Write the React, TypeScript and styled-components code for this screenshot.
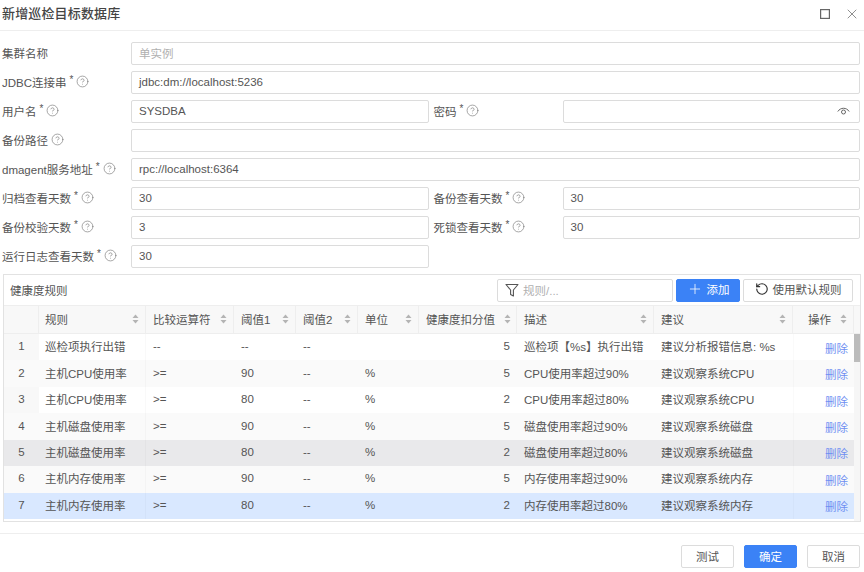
import React from "react";
import styled, { createGlobalStyle } from "styled-components";
import { CircleHelp, Plus, RotateCcw, X } from "lucide-react";

const FONT = `"Liberation Sans", "Noto Sans CJK SC", sans-serif`;
const COLUMNS = "35px 107px 88px 62px 62px 61px 98px 137px 139px 61px";

const GlobalStyle = createGlobalStyle`
  html, body {
    margin: 0;
    padding: 0;
    background: #fff;
    font-family: ${FONT};
  }
  * {
    box-sizing: border-box;
  }
`;

const Dialog = styled.div`
  width: 864px;
  height: 572px;
  display: flex;
  flex-direction: column;
  background: #fff;
  color: #555;
  font-size: 11.5px;
  overflow: hidden;
`;

const Header = styled.div`
  height: 31px;
  flex: none;
  display: flex;
  align-items: center;
  justify-content: space-between;
  padding: 0 4px 3px 2px;
  border-bottom: 1px solid #eee;
`;

const Title = styled.div`
  font-size: 13px;
  font-weight: 500;
  letter-spacing: 0.15px;
  color: #444;
  padding-bottom: 2px;
`;

const HeaderTools = styled.div`
  display: flex;
  align-items: center;
  gap: 14px;
  color: #666;
`;

const Form = styled.div`
  display: flex;
  flex-direction: column;
  gap: 6px;
  padding: 11px 4px 0 2px;
`;

const FormRow = styled.div`
  display: flex;
  gap: 5px;
  height: 23px;
`;

const Field = styled.div`
  flex: 1 1 0;
  min-width: 0;
  display: flex;
  align-items: center;
`;

const Label = styled.div`
  width: 129px;
  flex: none;
  display: flex;
  align-items: center;
  white-space: nowrap;
  color: #555;
  padding-bottom: 2px;
`;

const Star = styled.span`
  margin-left: 3px;
  font-size: 10px;
  line-height: 1;
  position: relative;
  top: -2px;
`;

const Help = styled(CircleHelp)`
  margin-left: 3px;
  color: #777;
  flex: none;
`;

const InputBox = styled.div<{ $empty?: boolean }>`
  flex: 1;
  height: 23px;
  display: flex;
  align-items: center;
  justify-content: space-between;
  padding: 0 7px 2px;
  border: 1px solid #dcdcdc;
  border-radius: 2px;
  color: ${(p) => (p.$empty ? "#b0b0b0" : "#555")};
  background: #fff;
`;

const Panel = styled.div`
  margin: 6px 3px 0 3px;
  height: 248px;
  flex: none;
  border: 1px solid #e2e2e2;
  display: flex;
  flex-direction: column;
  overflow: hidden;
`;

const Toolbar = styled.div`
  height: 30px;
  flex: none;
  display: flex;
  align-items: center;
  padding: 0 7px 0 6px;
`;

const PanelTitle = styled.div`
  flex: 1;
`;

const SearchBox = styled.div`
  width: 176px;
  height: 23px;
  display: flex;
  align-items: center;
  gap: 4px;
  padding: 0 7px;
  border: 1px solid #dcdcdc;
  border-radius: 2px;
  color: #b0b0b0;
`;

const Button = styled.button<{ $primary?: boolean; $w: number }>`
  width: ${(p) => p.$w}px;
  height: 23px;
  display: inline-flex;
  align-items: center;
  justify-content: center;
  gap: 4px;
  padding: 0 0 2px;
  font: inherit;
  border-radius: 2px;
  border: 1px solid ${(p) => (p.$primary ? "#3b82f6" : "#dcdcdc")};
  background: ${(p) => (p.$primary ? "#3b82f6" : "#fff")};
  color: ${(p) => (p.$primary ? "#fff" : "#555")};
`;

const AddButton = styled(Button)`
  margin-left: 3px;
`;

const ResetButton = styled(Button)`
  margin-left: 3px;
`;

const HeadRow = styled.div`
  height: 29px;
  flex: none;
  display: grid;
  grid-template-columns: ${COLUMNS} 6px;
  background: #f8f8f8;
  border-top: 1px solid #eee;
  border-bottom: 1px solid #eee;
`;

const HeadCell = styled.div<{ $end?: boolean }>`
  display: flex;
  align-items: center;
  justify-content: ${(p) => (p.$end ? "flex-end" : "space-between")};
  gap: 9px;
  padding: 0 6px 2px 7px;
  border-right: 1px solid #eee;
  color: #555;
  white-space: nowrap;
`;

const RuleHead = styled(HeadCell)`
  padding-left: 6px;
`;

const TableBody = styled.div`
  flex: 1;
  min-height: 0;
  display: flex;
`;

const Rows = styled.div`
  width: 850px;
  flex: none;
`;

const tones = {
  plain: "#fff",
  even: "#fafafa",
  hover: "#e9e9eb",
  selected: "#d9e8ff",
};

const Row = styled.div<{ $tone: keyof typeof tones }>`
  height: 26.45px;
  display: grid;
  grid-template-columns: ${COLUMNS};
  align-items: stretch;
  background: ${(p) => tones[p.$tone]};
`;

const Cell = styled.div<{ $align?: string }>`
  display: flex;
  align-items: center;
  justify-content: ${(p) => p.$align || "flex-start"};
  padding: 0 7px 2px;
  white-space: nowrap;
  overflow: hidden;
  color: #555;
`;

const IndexCell = styled(Cell)<{ $plain: boolean }>`
  justify-content: center;
  padding: 0 0 2px;
  background: ${(p) => (p.$plain ? "#f8f8f8" : "transparent")};
`;

const RuleCell = styled(Cell)`
  padding-left: 6px;
  border-right: 1px solid rgba(0, 0, 0, 0.025);
`;

const DeleteCell = styled(Cell)`
  justify-content: flex-end;
  padding: 1px 6px 0 0;
  color: #6f8ff2;
  border-left: 1px solid rgba(0, 0, 0, 0.02);
`;

const Track = styled.div`
  width: 6px;
  flex: none;
  background: #f6f6f6;
`;

const Thumb = styled.div`
  height: 28px;
  background: #bcbcbc;
`;

const Footer = styled.div`
  margin-top: 11px;
  border-top: 1px solid #eee;
  flex: 1;
  display: flex;
  justify-content: flex-end;
  align-items: flex-start;
  gap: 10px;
  padding: 11px 4px 0 0;
`;

const SortIcon = () => (
  <svg width="7" height="10" viewBox="0 0 7 10" style={{ flex: "none" }}>
    <path d="M3.5 0.5 L6.5 4 L0.5 4 Z" fill="#b4b4b4" />
    <path d="M3.5 9.5 L6.5 6 L0.5 6 Z" fill="#b4b4b4" />
  </svg>
);

const MaximizeIcon = () => (
  <svg width="10" height="10" viewBox="0 0 10 10" fill="none">
    <rect x="0.6" y="0.6" width="8.8" height="8.8" stroke="currentColor" strokeWidth="1.2" />
  </svg>
);

const EyeIcon = () => (
  <svg width="13" height="10" viewBox="0 0 13 10" fill="none" stroke="#666" strokeWidth="1" style={{ marginRight: 2 }}>
    <path d="M0.8 5.5 C3.5 1.2 9.5 1.2 12.2 5.5" />
    <circle cx="6.5" cy="6" r="2" />
  </svg>
);

const FunnelIcon = () => (
  <svg width="14" height="14" viewBox="0 0 14 14" fill="none" stroke="#555" strokeWidth="1.1" strokeLinejoin="round">
    <path d="M1 1.5 H13 L8.4 7 V13 L5.6 11.4 V7 Z" />
  </svg>
);

const FormLabel = ({ text, star, help }: { text: string; star?: boolean; help?: boolean }) => (
  <Label>
    {text}
    {star && <Star>*</Star>}
    {help && <Help size={13} strokeWidth={1.2} />}
  </Label>
);

const heads = ["比较运算符", "阈值1", "阈值2", "单位", "健康度扣分值", "描述", "建议"];

type Rule = [string, string, string, string, string, string, string, string];

const rules: Rule[] = [
  ["巡检项执行出错", "--", "--", "--", "", "5", "巡检项【%s】执行出错", "建议分析报错信息: %s"],
  ["主机CPU使用率", ">=", "90", "--", "%", "5", "CPU使用率超过90%", "建议观察系统CPU"],
  ["主机CPU使用率", ">=", "80", "--", "%", "2", "CPU使用率超过80%", "建议观察系统CPU"],
  ["主机磁盘使用率", ">=", "90", "--", "%", "5", "磁盘使用率超过90%", "建议观察系统磁盘"],
  ["主机磁盘使用率", ">=", "80", "--", "%", "2", "磁盘使用率超过80%", "建议观察系统磁盘"],
  ["主机内存使用率", ">=", "90", "--", "%", "5", "内存使用率超过90%", "建议观察系统内存"],
  ["主机内存使用率", ">=", "80", "--", "%", "2", "内存使用率超过80%", "建议观察系统内存"],
];

const toneOf = (i: number): keyof typeof tones => {
  if (i === 4) return "hover";
  if (i === 6) return "selected";
  return i % 2 === 1 ? "even" : "plain";
};

export default function App() {
  return (
    <Dialog>
      <GlobalStyle />
      <Header>
        <Title>新增巡检目标数据库</Title>
        <HeaderTools>
          <MaximizeIcon />
          <X size={16} strokeWidth={1.1} />
        </HeaderTools>
      </Header>

      <Form>
        <FormRow>
          <Field>
            <FormLabel text="集群名称" />
            <InputBox $empty>单实例</InputBox>
          </Field>
        </FormRow>
        <FormRow>
          <Field>
            <FormLabel text="JDBC连接串" star help />
            <InputBox>jdbc:dm://localhost:5236</InputBox>
          </Field>
        </FormRow>
        <FormRow>
          <Field>
            <FormLabel text="用户名" star help />
            <InputBox>SYSDBA</InputBox>
          </Field>
          <Field>
            <FormLabel text="密码" star help />
            <InputBox>
              <span />
              <EyeIcon />
            </InputBox>
          </Field>
        </FormRow>
        <FormRow>
          <Field>
            <FormLabel text="备份路径" help />
            <InputBox />
          </Field>
        </FormRow>
        <FormRow>
          <Field>
            <FormLabel text="dmagent服务地址" star help />
            <InputBox>rpc://localhost:6364</InputBox>
          </Field>
        </FormRow>
        <FormRow>
          <Field>
            <FormLabel text="归档查看天数" star help />
            <InputBox>30</InputBox>
          </Field>
          <Field>
            <FormLabel text="备份查看天数" star help />
            <InputBox>30</InputBox>
          </Field>
        </FormRow>
        <FormRow>
          <Field>
            <FormLabel text="备份校验天数" star help />
            <InputBox>3</InputBox>
          </Field>
          <Field>
            <FormLabel text="死锁查看天数" star help />
            <InputBox>30</InputBox>
          </Field>
        </FormRow>
        <FormRow>
          <Field>
            <FormLabel text="运行日志查看天数" star help />
            <InputBox>30</InputBox>
          </Field>
          <Field />
        </FormRow>
      </Form>

      <Panel>
        <Toolbar>
          <PanelTitle>健康度规则</PanelTitle>
          <SearchBox>
            <FunnelIcon />
            规则/...
          </SearchBox>
          <AddButton $primary $w={64}>
            <Plus size={16} strokeWidth={1.2} />
            添加
          </AddButton>
          <ResetButton $w={110}>
            <RotateCcw size={14} strokeWidth={2} color="#333" />
            使用默认规则
          </ResetButton>
        </Toolbar>

        <HeadRow>
          <HeadCell />
          <RuleHead>
            规则
            <SortIcon />
          </RuleHead>
          {heads.map((h) => (
            <HeadCell key={h}>
              {h}
              <SortIcon />
            </HeadCell>
          ))}
          <HeadCell $end>
            操作
            <SortIcon />
          </HeadCell>
          <span />
        </HeadRow>

        <TableBody>
          <Rows>
            {rules.map((r, i) => (
              <Row key={i} $tone={toneOf(i)}>
                <IndexCell $plain={toneOf(i) === "plain"}>{i + 1}</IndexCell>
                <RuleCell>{r[0]}</RuleCell>
                <Cell>{r[1]}</Cell>
                <Cell>{r[2]}</Cell>
                <Cell>{r[3]}</Cell>
                <Cell>{r[4]}</Cell>
                <Cell $align="flex-end">{r[5]}</Cell>
                <Cell>{r[6]}</Cell>
                <Cell>{r[7]}</Cell>
                <DeleteCell>删除</DeleteCell>
              </Row>
            ))}
          </Rows>
          <Track>
            <Thumb />
          </Track>
        </TableBody>
      </Panel>

      <Footer>
        <Button $w={53}>测试</Button>
        <Button $primary $w={53}>确定</Button>
        <Button $w={53}>取消</Button>
      </Footer>
    </Dialog>
  );
}
